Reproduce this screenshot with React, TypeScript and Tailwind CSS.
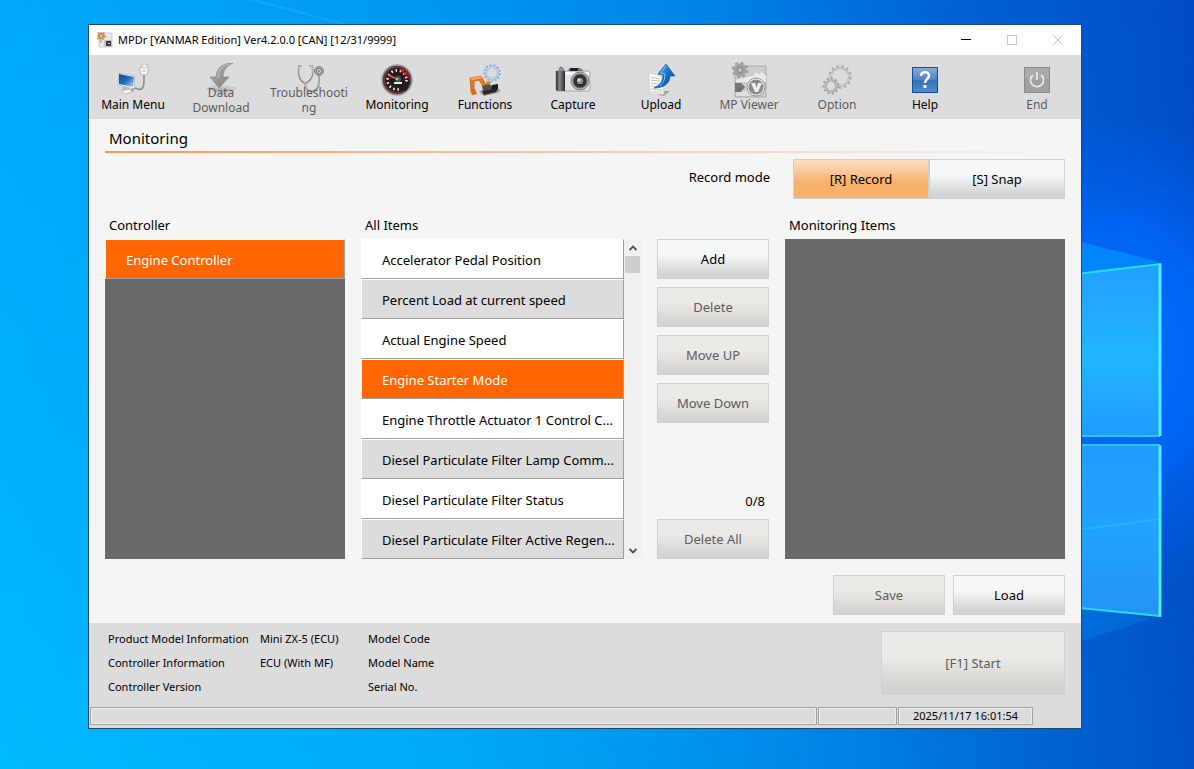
import type { ReactNode } from "react";
import { useState } from "react";
import clsx from "clsx";

type ToolItem = {
  label: string;
  icon: ReactNode;
  disabled?: boolean;
};

const allItems = [
  "Accelerator Pedal Position",
  "Percent Load at current speed",
  "Actual Engine Speed",
  "Engine Starter Mode",
  "Engine Throttle Actuator 1 Control C...",
  "Diesel Particulate Filter Lamp Comm...",
  "Diesel Particulate Filter Status",
  "Diesel Particulate Filter Active Regen...",
];

const Wallpaper = (): ReactNode => (
  <svg
    className="absolute inset-0 h-full w-full"
    viewBox="0 0 1194 769"
    preserveAspectRatio="xMaxYMid slice"
    aria-hidden="true"
  >
    <defs>
      <linearGradient id="sky" x1="0" y1="0" x2="1" y2="0">
        <stop offset="0" stopColor="#00a8fb" />
        <stop offset="0.35" stopColor="#0099f1" />
        <stop offset="0.6" stopColor="#0082e6" />
        <stop offset="0.8" stopColor="#0062d5" />
        <stop offset="1" stopColor="#004cc6" />
      </linearGradient>
      <linearGradient id="ground" x1="0" y1="0" x2="1" y2="0">
        <stop offset="0" stopColor="#00b9ff" />
        <stop offset="0.35" stopColor="#00acf8" />
        <stop offset="0.55" stopColor="#0098ef" />
        <stop offset="0.72" stopColor="#0081e2" />
        <stop offset="0.85" stopColor="#0068d3" />
        <stop offset="1" stopColor="#0052c5" />
      </linearGradient>
      <linearGradient id="fade" x1="0" y1="0" x2="0" y2="1">
        <stop offset="0" stopColor="#000" />
        <stop offset="1" stopColor="#fff" />
      </linearGradient>
      <mask id="lower">
        <rect width="1194" height="769" fill="url(#fade)" />
      </mask>
      <radialGradient id="glow">
        <stop offset="0" stopColor="#006eff" />
        <stop offset="0.5" stopColor="#0068fc" stopOpacity="0.8" />
        <stop offset="1" stopColor="#0060f0" stopOpacity="0" />
      </radialGradient>
      <linearGradient id="paneTop" x1="0" y1="0" x2="0" y2="1">
        <stop offset="0" stopColor="#229fff" />
        <stop offset="0.55" stopColor="#22b5ff" />
        <stop offset="1" stopColor="#229bff" />
      </linearGradient>
      <linearGradient id="paneBottom" x1="0" y1="0" x2="0" y2="1">
        <stop offset="0" stopColor="#229cff" />
        <stop offset="0.5" stopColor="#22a2ff" />
        <stop offset="1" stopColor="#2294f4" />
      </linearGradient>
    </defs>
    <rect width="1194" height="769" fill="url(#sky)" />
    <rect width="1194" height="769" fill="url(#ground)" mask="url(#lower)" />
    <ellipse cx="1120" cy="350" rx="190" ry="240" fill="url(#glow)" />
    <path d="M248 0 L340 24 L348 24 L258 0 Z" fill="#22b0ff" opacity="0.45" />
    <path d="M660 769 L790 728 L1081 641 L1150 619 L1081 605 Z" fill="#0088f0" opacity="0.35" />
    <path d="M1081 242 L1160 262 L1081 275 Z" fill="#0090ff" opacity="0.75" />
    <path d="M1060 276 L1160 264 V436 H1060 Z" fill="url(#paneTop)" />
    <path d="M1060 445 H1160 V616 L1060 606 Z" fill="url(#paneBottom)" />
    <g fill="none" stroke="#28c8ff" strokeWidth="2">
      <path d="M1060 276 L1160 264" stroke="#25dcff" />
      <path d="M1060 436 H1160 M1060 445 H1160" />
      <path d="M1060 606 L1160 616" stroke="#25dcff" />
      <path d="M1060 532 L1160 519" stroke="#24b4ff" />
      <path d="M1160 263 V436 M1160 445 V617" stroke="#30e6ff" strokeWidth="3" />
      <path d="M1160 264 V436 M1160 446 V616" stroke="#7af4ff" strokeWidth="1" />
    </g>
  </svg>
);

const Gear = ({
  cx,
  cy,
  r,
  width,
  color,
  teeth,
}: {
  cx: number;
  cy: number;
  r: number;
  width: number;
  color: string;
  teeth: string;
}): ReactNode => (
  <g fill="none" stroke={color}>
    <circle cx={cx} cy={cy} r={r} strokeWidth={width} />
    <circle cx={cx} cy={cy} r={r + width / 2 + 0.8} strokeWidth="2" strokeDasharray={teeth} />
  </g>
);

const MainMenuIcon = (): ReactNode => (
  <svg width="32" height="32" viewBox="0 0 32 32" aria-hidden="true">
    <defs>
      <linearGradient id="screen" x1="0" y1="0" x2="1" y2="1">
        <stop offset="0" stopColor="#0d4d91" />
        <stop offset="0.5" stopColor="#1e6fbe" />
        <stop offset="1" stopColor="#b4d7f0" />
      </linearGradient>
    </defs>
    <path d="M27 10 V17 C27 25 24 26 21 25 C17 23 16 25 14 28" fill="none" stroke="#8d8d8d" strokeWidth="1.6" />
    <path d="M25 0 h5 v3 h1 v6 l-2 2 h-4 l-2 -2 V3 h2 Z" fill="#f7f7f7" stroke="#a8a8a8" strokeWidth="0.8" />
    <path d="M25 4 h4 M25 7 h4" stroke="#bcbcbc" />
    <path d="M7 22 l5 2 -1 4 -6 -2 Z" fill="#bcbcbc" />
    <path d="M4 27 l8 -2 4 3 -8 2 Z" fill="#f4f4f4" stroke="#aaa" strokeWidth="0.6" />
    <path d="M2 9 L18 12 L17 25 L1 21 Z" fill="#f2f2f2" stroke="#9aa4ad" strokeWidth="0.6" />
    <path d="M2 10 L17 13 L16 23 L2 20 Z" fill="url(#screen)" />
  </svg>
);

const DownloadIcon = (): ReactNode => (
  <svg width="32" height="34" viewBox="0 0 32 34" aria-hidden="true">
    <defs>
      <linearGradient id="downArrow" x1="0" y1="0" x2="1" y2="1">
        <stop offset="0" stopColor="#b5b5b5" />
        <stop offset="1" stopColor="#7c7c7c" />
      </linearGradient>
    </defs>
    <path d="M1 26 L12 22 L31 25 L22 33 Z" fill="#cdcdcd" stroke="#bbb" strokeWidth="0.6" />
    <path d="M5 27 L14 24 L26 26 L20 31 Z" fill="#b9b9b9" />
    <path
      d="M28 0 C18 0 12 4 11 14 L5 14 L14 25 L24 14 L18 14 C18 8 21 3 28 0 Z"
      fill="url(#downArrow)"
      stroke="#8a8a8a"
      strokeWidth="0.7"
    />
    <path d="M24 1 C17 3 13 7 13 15" fill="none" stroke="#c8c8c8" />
  </svg>
);

const TroubleIcon = (): ReactNode => (
  <svg width="32" height="32" viewBox="0 0 32 32" aria-hidden="true">
    <g fill="none" strokeLinecap="round">
      <path d="M8 2 H6 C5 11 7 17 12 19 C18 17 21 11 19 2 H17" stroke="#8f8f8f" strokeWidth="2" />
      <path d="M8 2 H6 C6 11 8 17 12 18 C17 16 20 11 19 2 H17" stroke="#e8e8e8" strokeWidth="0.8" />
      <path d="M12 19 C12 25 15 28 20 27 C27 25 26 17 26 10" stroke="#939393" strokeWidth="2" />
      <path d="M12 19 C12 25 15 27 20 26 C26 24 26 17 26 10" stroke="#dedede" strokeWidth="0.6" />
    </g>
    <circle cx="26" cy="7" r="4.5" fill="#a9a9a9" stroke="#878787" />
    <circle cx="26" cy="7" r="2.6" fill="#dadada" stroke="#777" />
    <circle cx="26" cy="7" r="1" fill="#777" />
  </svg>
);

const MonitoringIcon = (): ReactNode => (
  <svg width="32" height="32" viewBox="0 0 32 32" aria-hidden="true">
    <circle cx="16" cy="16" r="15" fill="#4a4444" stroke="#a2a2a2" strokeWidth="1.5" />
    <circle cx="16" cy="16" r="12.5" fill="#211d1d" stroke="#a32630" strokeWidth="1" />
    <circle cx="16" cy="16" r="9.5" fill="none" stroke="#f4f4f4" strokeWidth="2.5" strokeDasharray="1.5 2.8" />
    <path d="M20 6 A10.5 10.5 0 0 1 26 13" fill="none" stroke="#e51c2a" strokeWidth="2.5" strokeDasharray="3 1" />
    <path d="M20 20 L29 17 L26 26 L18 28 Z" fill="#211d1d" />
    <path d="M7 11 L18 16" stroke="#e2643a" strokeWidth="1.6" />
    <circle cx="17" cy="15" r="3" fill="#5b5553" />
    <circle cx="16" cy="15" r="1.3" fill="#d1b5a5" />
    <path d="M13 18 h8 v2 h-8 Z" fill="#ececec" />
  </svg>
);

const FunctionsIcon = (): ReactNode => (
  <svg width="32" height="32" viewBox="0 0 32 32" aria-hidden="true">
    <Gear cx={23} cy={9} r={6} width={2} color="#82b5df" teeth="2 1.8" />
    <circle cx="23" cy="9" r="6" fill="none" stroke="#d9ebf8" strokeWidth="0.9" />
    <path d="M10 28 l4 -3 13 -1 5 2 -3 3 -14 3 Z" fill="#a09d9b" />
    <path d="M13 27 l11 -3 5 1 -2 3 -12 3 Z" fill="#292626" />
    <path d="M13 22 l6 -3 5 4 -3 3 -7 0 Z" fill="#514e4c" />
    <path d="M23 21 l6 -1 0 5 -7 0 Z" fill="#1d1c1c" />
    <path d="M17 18 l4 -1 1 3 -4 1 Z" fill="#ed7a24" />
    <path d="M2 26 L1 14 L12 12 L17 21 L14 22 L10 16 L5 17 L5 26 Z" fill="#f1791d" stroke="#b84f10" strokeWidth="0.7" />
    <path d="M1 14 L12 12 L13 14 L3 16 Z" fill="#ffa757" />
    <path d="M1 26 l5 -1 2 5 -5 1 Z" fill="#de6818" />
  </svg>
);

const CaptureIcon = (): ReactNode => (
  <svg width="36" height="32" viewBox="0 0 36 32" aria-hidden="true">
    <defs>
      <linearGradient id="grip" x1="0" y1="0" x2="1" y2="0">
        <stop offset="0" stopColor="#2d2d2d" />
        <stop offset="0.4" stopColor="#8a8a8a" />
        <stop offset="1" stopColor="#292929" />
      </linearGradient>
    </defs>
    <path d="M4 5 l1 -2 h2 l2 2 v3 h-5 Z" fill="#679bc9" stroke="#59738b" strokeWidth="0.5" />
    <path d="M12 7 l3 -3 h10 l4 3 Z" fill="#777" />
    <path d="M1 7 h33 q1 0 1 2 v17 q0 1 -2 1 H3 q-2 0 -2 -2 Z" fill="#e2e2e2" stroke="#9a9a9a" strokeWidth="0.8" />
    <path d="M1 7 h9 v20 H3 q-2 0 -2 -2 Z" fill="url(#grip)" />
    <path d="M11 8 h23 v3 h-23 Z" fill="#fafafa" />
    <path d="M15 4 h8 v3 h-8 Z" fill="#222" />
    <circle cx="25" cy="17" r="9" fill="#b6b6b6" stroke="#7f7f7f" />
    <circle cx="25" cy="17" r="7" fill="#343434" stroke="#696969" />
    <circle cx="25" cy="17" r="4" fill="#8e8988" stroke="#1d1d1d" />
    <circle cx="24" cy="16" r="1.5" fill="#dedede" />
  </svg>
);

const UploadIcon = (): ReactNode => (
  <svg width="32" height="32" viewBox="0 0 32 32" aria-hidden="true">
    <defs>
      <linearGradient id="upArrow" x1="0" y1="0" x2="1" y2="1">
        <stop offset="0" stopColor="#59b7ee" />
        <stop offset="0.5" stopColor="#1775c8" />
        <stop offset="1" stopColor="#063d91" />
      </linearGradient>
    </defs>
    <path d="M14 27 L25 27 L19 32 L13 31 Z" fill="#8e8e8e" opacity="0.7" />
    <path d="M4 9 L16 12 L19 30 L5 30 Z" fill="#fbfbfb" stroke="#c9c9c9" strokeWidth="0.7" />
    <path d="M6 13 l9 2 M6 16 l9 1 M6 19 l7 1 M6 22 l9 1 M6 25 l11 1 M6 28 l11 0" stroke="#c2c2c2" />
    <path
      d="M21 0 L30 12 L25 12 C25 20 18 24 9 24 C15 21 18 17 18 11 L13 10 Z"
      fill="url(#upArrow)"
      stroke="#1158a8"
      strokeWidth="0.7"
    />
    <path d="M21 2 L16 9 L20 10 C20 16 18 19 15 22" fill="none" stroke="#9ad8f8" strokeWidth="0.8" />
  </svg>
);

const ViewerIcon = (): ReactNode => (
  <svg width="36" height="36" viewBox="0 0 36 36" aria-hidden="true">
    <path d="M4 4 h31 v31 h-31 Z" fill="#cdcdcd" stroke="#aaa" />
    <path d="M5 18 L16 15 L22 14 l3 -4 3 2 3 -2 4 4 V20 H5 Z" fill="#eaeaea" />
    <path d="M5 29 h12 l3 5 H5 Z" fill="#dedede" />
    <path d="M4 21 h6 l4 4 -4 5 h-6 Z" fill="#747474" />
    <Gear cx={9} cy={8} r={4.5} width={4} color="#a0a0a0" teeth="3 2.8" />
    <circle cx="9" cy="8" r="2.5" fill="#c7c7c7" stroke="#777" />
    <circle cx="25" cy="25" r="9" fill="#eee" stroke="#999" />
    <circle cx="25" cy="25" r="7.5" fill="#8a8a8a" />
    <path d="M20 21 h4 l1.500 5 1.500 -5 h4 l-4 9 h-3 Z" fill="#eee" />
  </svg>
);

const OptionIcon = (): ReactNode => (
  <svg width="32" height="32" viewBox="0 0 32 32" aria-hidden="true">
    <Gear cx={19} cy={13} r={9} width={2} color="#ababab" teeth="2.5 2.7" />
    <circle cx="19" cy="13" r="9" fill="none" stroke="#d6d6d6" strokeWidth="0.9" />
    <circle cx="10" cy="22" r="8" fill="#dcdcdc" />
    <Gear cx={10} cy={22} r={5.5} width={2.5} color="#a2a2a2" teeth="2.2 2.2" />
    <circle cx="10" cy="22" r="5.5" fill="none" stroke="#cfcfcf" strokeWidth="0.9" />
  </svg>
);

const HelpIcon = (): ReactNode => (
  <svg width="28" height="28" viewBox="0 0 28 28" aria-hidden="true">
    <defs>
      <linearGradient id="helpFill" x1="0" y1="0" x2="0" y2="1">
        <stop offset="0" stopColor="#89acda" />
        <stop offset="0.48" stopColor="#4f82c6" />
        <stop offset="0.5" stopColor="#3070bb" />
        <stop offset="1" stopColor="#4f8bcd" />
      </linearGradient>
    </defs>
    <rect x="1.5" y="1.5" width="25" height="25" fill="url(#helpFill)" stroke="#164d9b" />
    <path
      d="M10 10 C10 5 18 5 18 9.500 C18 13 14 13 14 17"
      fill="none"
      stroke="#fff"
      strokeWidth="2.5"
    />
    <rect x="12.5" y="19" width="3" height="3" fill="#fff" />
  </svg>
);

const EndIcon = (): ReactNode => (
  <svg width="28" height="28" viewBox="0 0 28 28" aria-hidden="true">
    <rect x="1.5" y="1.5" width="25" height="25" fill="#a0a0a0" stroke="#8d8d8d" />
    <path d="M2 2 h24 v11 H2 Z" fill="#ababab" />
    <path d="M10 9 A6.500 6.500 0 1 0 18 9 M14 6 V14" fill="none" stroke="#e6e6e6" strokeWidth="1.8" />
  </svg>
);

const AppIcon = (): ReactNode => (
  <svg width="16" height="16" viewBox="0 0 16 16" aria-hidden="true">
    <path d="M2 1 h13 v14 H2 Z" fill="#e8e8e8" stroke="#d0d0d0" />
    <path d="M7 8 h8 v7 H7 Z" fill="#c4c4c4" />
    <path d="M3 9 h2 v2 H3 Z" fill="#b7b7b7" />
    <rect x="9" y="9" width="5" height="5" rx="1" fill="#333" />
    <rect x="11" y="11" width="2" height="1" fill="#eee" />
    <Gear cx={4} cy={4} r={2} width={2} color="#cf8a4a" teeth="1.5 1.3" />
  </svg>
);

const tools: ToolItem[] = [
  { label: "Main Menu", icon: <MainMenuIcon /> },
  { label: "Data Download", icon: <DownloadIcon />, disabled: true },
  { label: "Troubleshooting", icon: <TroubleIcon />, disabled: true },
  { label: "Monitoring", icon: <MonitoringIcon /> },
  { label: "Functions", icon: <FunctionsIcon /> },
  { label: "Capture", icon: <CaptureIcon /> },
  { label: "Upload", icon: <UploadIcon /> },
  { label: "MP Viewer", icon: <ViewerIcon />, disabled: true },
  { label: "Option", icon: <OptionIcon />, disabled: true },
  { label: "Help", icon: <HelpIcon /> },
];

const ToolButton = ({ label, icon, disabled }: ToolItem): ReactNode => (
  <button
    type="button"
    disabled={disabled}
    className="relative flex h-16 w-[88px] flex-col items-center justify-end text-xs leading-[15px] text-black disabled:text-[#5c5c5c]"
  >
    <span className="absolute inset-x-0 top-[9px] flex h-8 items-center justify-center">{icon}</span>
    <span
      className={clsx(
        "relative w-20 text-center wrap-break-word",
        label.length > 10 ? "pb-1" : "pb-[7px]",
      )}
    >
      {label}
    </span>
  </button>
);

const PushButton = ({
  label,
  disabled,
  className,
}: {
  label: string;
  disabled?: boolean;
  className?: string;
}): ReactNode => (
  <button
    type="button"
    disabled={disabled}
    className={clsx(
      "border border-[#d0d0d0] bg-linear-to-b from-40% to-90% pt-0.5 text-[13px]",
      disabled
        ? "from-[#ebeae6] to-[#d4d3d0] text-[#5c5c5c]"
        : "from-[#f6f8f7] to-[#d3d3d3] text-black",
      className ?? "h-10 w-28",
    )}
  >
    {label}
  </button>
);

export default function App(): ReactNode {
  const [mode, setMode] = useState<"record" | "snap">("record");
  const [selected, setSelected] = useState<string>("Engine Starter Mode");

  return (
    <div className="relative flex min-h-screen bg-[#0090ee] pt-6 pr-28 pb-10 pl-22 font-['Noto_Sans','Open_Sans',sans-serif] text-black">
      <Wallpaper />
      <main className="relative flex grow flex-col border border-[#1b4a73] bg-[#f5f5f5]">
        <header className="flex h-[30px] items-center bg-white pl-2 text-[11px]">
          <AppIcon />
          <h1 className="ml-[5px] grow">MPDr [YANMAR Edition] Ver4.2.0.0 [CAN] [12/31/9999]</h1>
          <button type="button" aria-label="Minimize" className="flex w-[46px] justify-center">
            <svg width="10" height="10" viewBox="0 0 10 10" aria-hidden="true">
              <path d="M0 4.500 H10" stroke="#000" />
            </svg>
          </button>
          <button type="button" aria-label="Maximize" disabled className="flex w-[46px] justify-center">
            <svg width="10" height="10" viewBox="0 0 10 10" aria-hidden="true">
              <rect x="0.5" y="0.5" width="9" height="9" fill="none" stroke="#c4c4c4" />
            </svg>
          </button>
          <button type="button" aria-label="Close" disabled className="flex w-[46px] justify-center">
            <svg width="10" height="10" viewBox="0 0 10 10" aria-hidden="true">
              <path d="M0 0 L10 10 M10 0 L0 10" stroke="#c4c4c4" />
            </svg>
          </button>
        </header>

        <nav className="flex bg-[#dcdcdc]" aria-label="Main">
          {tools.map((tool) => (
            <ToolButton key={tool.label} {...tool} />
          ))}
          <div className="ml-auto">
            <ToolButton label="End" icon={<EndIcon />} disabled />
          </div>
        </nav>

        <section className="flex grow flex-col px-4 pb-2">
          <h2 className="px-1 pt-[9px] pb-[3px] text-[15px] leading-5">Monitoring</h2>
          <div className="h-0.5 bg-linear-to-r from-[#ff9650] to-[#f5f5f5]" />

          <div className="mt-[6px] flex items-start justify-end text-[13px]">
            <span id="record-mode" className="mt-2 mr-[23px] leading-5">
              Record mode
            </span>
            <div role="group" aria-labelledby="record-mode" className="flex w-[272px]">
              <button
                type="button"
                aria-pressed={mode === "record"}
                onClick={(): void => setMode("record")}
                className={clsx(
                  "h-10 w-1/2 border border-[#d0d0d0] bg-linear-to-b pt-0.5",
                  mode === "record"
                    ? "from-[#fde0c4] to-[#f7b16b] to-60%"
                    : "from-[#f6f8f7] from-40% to-[#d3d3d3] to-90%",
                )}
              >
                [R] Record
              </button>
              <button
                type="button"
                aria-pressed={mode === "snap"}
                onClick={(): void => setMode("snap")}
                className={clsx(
                  "h-10 w-1/2 border border-[#d0d0d0] bg-linear-to-b pt-0.5",
                  mode === "snap"
                    ? "from-[#fde0c4] to-[#f7b16b] to-60%"
                    : "from-[#f6f8f7] from-40% to-[#d3d3d3] to-90%",
                )}
              >
                [S] Snap
              </button>
            </div>
          </div>

          <div className="mt-4 grid grow grid-cols-[6fr_7fr_112px_7fr] gap-x-4 text-[13px]">
            <div className="flex flex-col">
              <h3 className="mb-1 px-1 leading-5">Controller</h3>
              <ul className="grow bg-[#696969]">
                <li>
                  <button
                    type="button"
                    className="h-10 w-full border border-t-white border-r-[#a0a0a0] border-b-[#a0a0a0] border-l-white bg-[#ff6600] px-5 pt-1 text-left text-white"
                  >
                    Engine Controller
                  </button>
                </li>
              </ul>
            </div>

            <div className="flex min-w-0 flex-col">
              <h3 className="mb-1 px-1 leading-5">All Items</h3>
              <div className="flex grow">
                <ul className="min-w-0 grow">
                  {allItems.map((item, index) => (
                    <li key={item}>
                      <button
                        type="button"
                        onClick={(): void => setSelected(item)}
                        className={clsx(
                          "block h-10 w-full border border-t-white border-r-[#a0a0a0] border-b-[#a0a0a0] border-l-white pt-1 pl-5 text-left whitespace-nowrap",
                          item === selected
                            ? "bg-[#ff6600] text-white"
                            : index % 2 === 0
                              ? "bg-white"
                              : "bg-[#dcdcdc]",
                        )}
                      >
                        {item}
                      </button>
                    </li>
                  ))}
                </ul>
                <div className="flex w-[17px] shrink-0 flex-col items-center bg-[#f0f0f0]">
                  <button type="button" aria-label="Scroll up" className="flex h-[17px] items-center">
                    <svg width="8" height="6" viewBox="0 0 8 6" aria-hidden="true">
                      <path d="M0.500 5 L4 1.500 L7.500 5" fill="none" stroke="#505050" strokeWidth="1.8" />
                    </svg>
                  </button>
                  <div className="h-[17px] w-[15px] bg-[#cdcdcd]" />
                  <button type="button" aria-label="Scroll down" className="mt-auto flex h-[17px] items-center">
                    <svg width="8" height="6" viewBox="0 0 8 6" aria-hidden="true">
                      <path d="M0.500 1 L4 4.500 L7.500 1" fill="none" stroke="#505050" strokeWidth="1.8" />
                    </svg>
                  </button>
                </div>
              </div>
            </div>

            <div className="flex flex-col gap-2 pt-6">
              <PushButton label="Add" />
              <PushButton label="Delete" disabled />
              <PushButton label="Move UP" disabled />
              <PushButton label="Move Down" disabled />
              <span className="mt-auto px-1 text-right leading-5">0/8</span>
              <PushButton label="Delete All" disabled />
            </div>

            <div className="flex flex-col">
              <h3 className="mb-1 px-1 leading-5">Monitoring Items</h3>
              <div className="grow bg-[#696969]" />
            </div>
          </div>

          <div className="mt-4 flex justify-end gap-2">
            <PushButton label="Save" disabled />
            <PushButton label="Load" />
          </div>
        </section>

        <footer className="bg-[#dcdcdc] text-[11px]">
          <div className="flex items-end justify-between pt-1 pr-4 pl-[19px]">
            <table className="text-left leading-6 whitespace-nowrap">
              <tbody>
                <tr>
                  <th className="w-38 p-0 font-normal">Product Model Information</th>
                  <td className="w-27 p-0">Mini ZX-5 (ECU)</td>
                  <td className="p-0">Model Code</td>
                </tr>
                <tr>
                  <th className="p-0 font-normal">Controller Information</th>
                  <td className="p-0">ECU (With MF)</td>
                  <td className="p-0">Model Name</td>
                </tr>
                <tr>
                  <th className="p-0 font-normal">Controller Version</th>
                  <td className="p-0" />
                  <td className="p-0">Serial No.</td>
                </tr>
              </tbody>
            </table>
            <PushButton label="[F1] Start" disabled className="mb-1 h-16 w-46" />
          </div>
          <div className="mt-2 mr-12 mb-[3px] ml-px flex gap-px leading-4">
            <div className="h-[18px] grow border border-[#a0a0a0] inset-ring inset-ring-[#f0f0f0]" />
            <div className="h-[18px] w-[79px] border border-[#a0a0a0] inset-ring inset-ring-[#f0f0f0]" />
            <div className="h-[18px] w-[135px] border border-[#a0a0a0] text-center inset-ring inset-ring-[#f0f0f0]">
              2025/11/17 16:01:54
            </div>
          </div>
        </footer>
      </main>
    </div>
  );
}
